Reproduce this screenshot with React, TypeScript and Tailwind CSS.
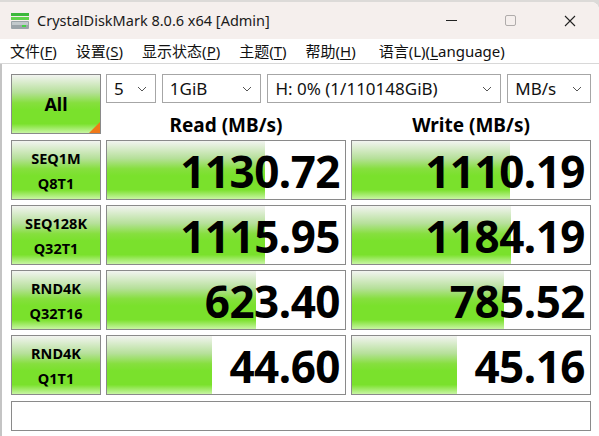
import { ReactNode } from "react";

const font = { fontFamily: '"Noto Sans", "Noto Sans CJK SC", sans-serif' };

const rows = [
  { a: "SEQ1M", b: "Q8T1", read: "1130.72", readPct: 66.5, write: "1110.19", writePct: 66.5 },
  { a: "SEQ128K", b: "Q32T1", read: "1115.95", readPct: 66.5, write: "1184.19", writePct: 67 },
  { a: "RND4K", b: "Q32T16", read: "623.40", readPct: 62.5, write: "785.52", writePct: 64 },
  { a: "RND4K", b: "Q1T1", read: "44.60", readPct: 44, write: "45.16", writePct: 44 },
];

const green =
  "bg-[linear-gradient(to_bottom,#f2f4f0_0%,#b6e09a_30%,#86df3e_48%,#7ae12c_60%,#7ae12c_84%,#c8f5a4_100%)]";

function Menu({ pre, k, post = "" }: { pre: string; k: string; post?: string }) {
  return (
    <span className="whitespace-pre">
      {pre}
      <span className="underline underline-offset-2">{k}</span>
      {post}
    </span>
  );
}

function Select({ w, children }: { w: string; children: ReactNode }) {
  return (
    <div className={`${w} h-[29px] flex items-center justify-between border border-[#a6a6a6] bg-white pl-[7px] pr-[8px] text-[17px] text-[#111]`}>
      <span>{children}</span>
      <svg width="10" height="6" viewBox="0 0 10 6">
        <path d="M1 1 L5 5 L9 1" fill="none" stroke="#555" strokeWidth="1" />
      </svg>
    </div>
  );
}

function Value({ text, pct }: { text: string; pct: number }) {
  return (
    <div className="relative h-[60px] border border-[#8a8a8a] bg-white">
      <div className={`absolute left-0 top-0 bottom-0 ${green}`} style={{ width: `${pct}%` }} />
      <div className="relative flex h-full items-center justify-end pr-[5px] pt-[2px] text-[44px] font-bold leading-none tracking-[-0.5px] text-black">
        {text}
      </div>
    </div>
  );
}

export default function App() {
  return (
    <div className="h-[436px] w-[599px] overflow-hidden bg-[#dcdad8]" style={font}>
      <div className="mt-[2px] h-[434px] rounded-tr-[8px] bg-white flex flex-col">
        {/* title bar */}
        <div className="h-[37px] flex items-center bg-[#f5efed] rounded-tr-[8px]">
          <svg className="ml-[10px]" width="20" height="20" viewBox="0 0 20 20">
            <rect x="1" y="2" width="18" height="3" fill="#3cb83c" />
            <rect x="1" y="6" width="18" height="3" fill="#5fd34a" />
            <rect x="1" y="10" width="18" height="8" rx="1" fill="#9aa3a8" />
            <rect x="2" y="11" width="16" height="3" fill="#c2c9cc" />
            <rect x="12" y="14" width="4" height="2" fill="#45d045" />
          </svg>
          <span className="ml-[7px] text-[14.5px] text-[#1a1a1a]">CrystalDiskMark 8.0.6 x64 [Admin]</span>
          <div className="ml-auto flex items-center">
            <div className="w-[59px] flex justify-center">
              <div className="h-[1px] w-[11px] bg-[#222]" />
            </div>
            <div className="w-[59px] flex justify-center">
              <div className="h-[11px] w-[11px] rounded-[2px] border border-[#b0acab]" />
            </div>
            <div className="w-[59px] flex justify-center">
              <svg width="12" height="12" viewBox="0 0 12 12">
                <path d="M1 1 L11 11 M11 1 L1 11" stroke="#222" strokeWidth="1.1" />
              </svg>
            </div>
          </div>
        </div>
        {/* menu bar */}
        <div className="h-[25px] flex items-center gap-[19px] pl-[10px] text-[15px] text-[#111] border-b border-[#d8d8d8]">
          <Menu pre="文件(" k="F" post=")" />
          <Menu pre="设置(" k="S" post=")" />
          <Menu pre="显示状态(" k="P" post=")" />
          <Menu pre="主题(" k="T" post=")" />
          <Menu pre="帮助(" k="H" post=")" />
          <span className="ml-[4px] whitespace-pre">
            语言(L)(<span className="underline underline-offset-2">L</span>anguage)
          </span>
        </div>
        {/* main */}
        <div className="flex-1 border-l-2 border-[#c4c4c4] pl-[9px] pt-[10px]">
          <div className="grid grid-cols-[90px_240px_240px] gap-x-[5px]">
            <div className={`relative h-[60px] border border-[#8a8a8a] ${green} flex items-center justify-center text-[18px] font-bold text-black`}>
              All
              <div className="absolute bottom-0 right-0 h-0 w-0 border-l-[11px] border-t-[11px] border-l-transparent border-t-transparent border-b-0 border-r-[0px] [border-bottom:11px_solid_#f07818]" />
            </div>
            <div className="col-span-2 flex flex-col">
              <div className="flex gap-[6px]">
                <Select w="w-[50px]">5</Select>
                <Select w="w-[100px]">1GiB</Select>
                <Select w="w-[235px]">H: 0% (1/110148GiB)</Select>
                <Select w="w-[84px]">MB/s</Select>
              </div>
              <div className="grid grid-cols-2 gap-x-[5px] pt-[13px] text-[19px] font-bold text-black leading-none">
                <div className="text-center">Read (MB/s)</div>
                <div className="text-center">Write (MB/s)</div>
              </div>
            </div>
          </div>
          <div className="mt-[5px] grid grid-cols-[90px_240px_240px] gap-x-[5px] gap-y-[5px]">
            {rows.map((r, i) => (
              <div key={i} className="contents">
                <div className={`h-[60px] border border-[#8a8a8a] ${green} flex flex-col items-center justify-center gap-[10px] pt-[1px] text-[14.5px] font-bold leading-none text-black`}>
                  <span>{r.a}</span>
                  <span>{r.b}</span>
                </div>
                <Value text={r.read} pct={r.readPct} />
                <Value text={r.write} pct={r.writePct} />
              </div>
            ))}
          </div>
          <div className="mt-[6px] h-[30px] w-[580px] border border-[#8a8a8a] bg-white" />
        </div>
      </div>
    </div>
  );
}
